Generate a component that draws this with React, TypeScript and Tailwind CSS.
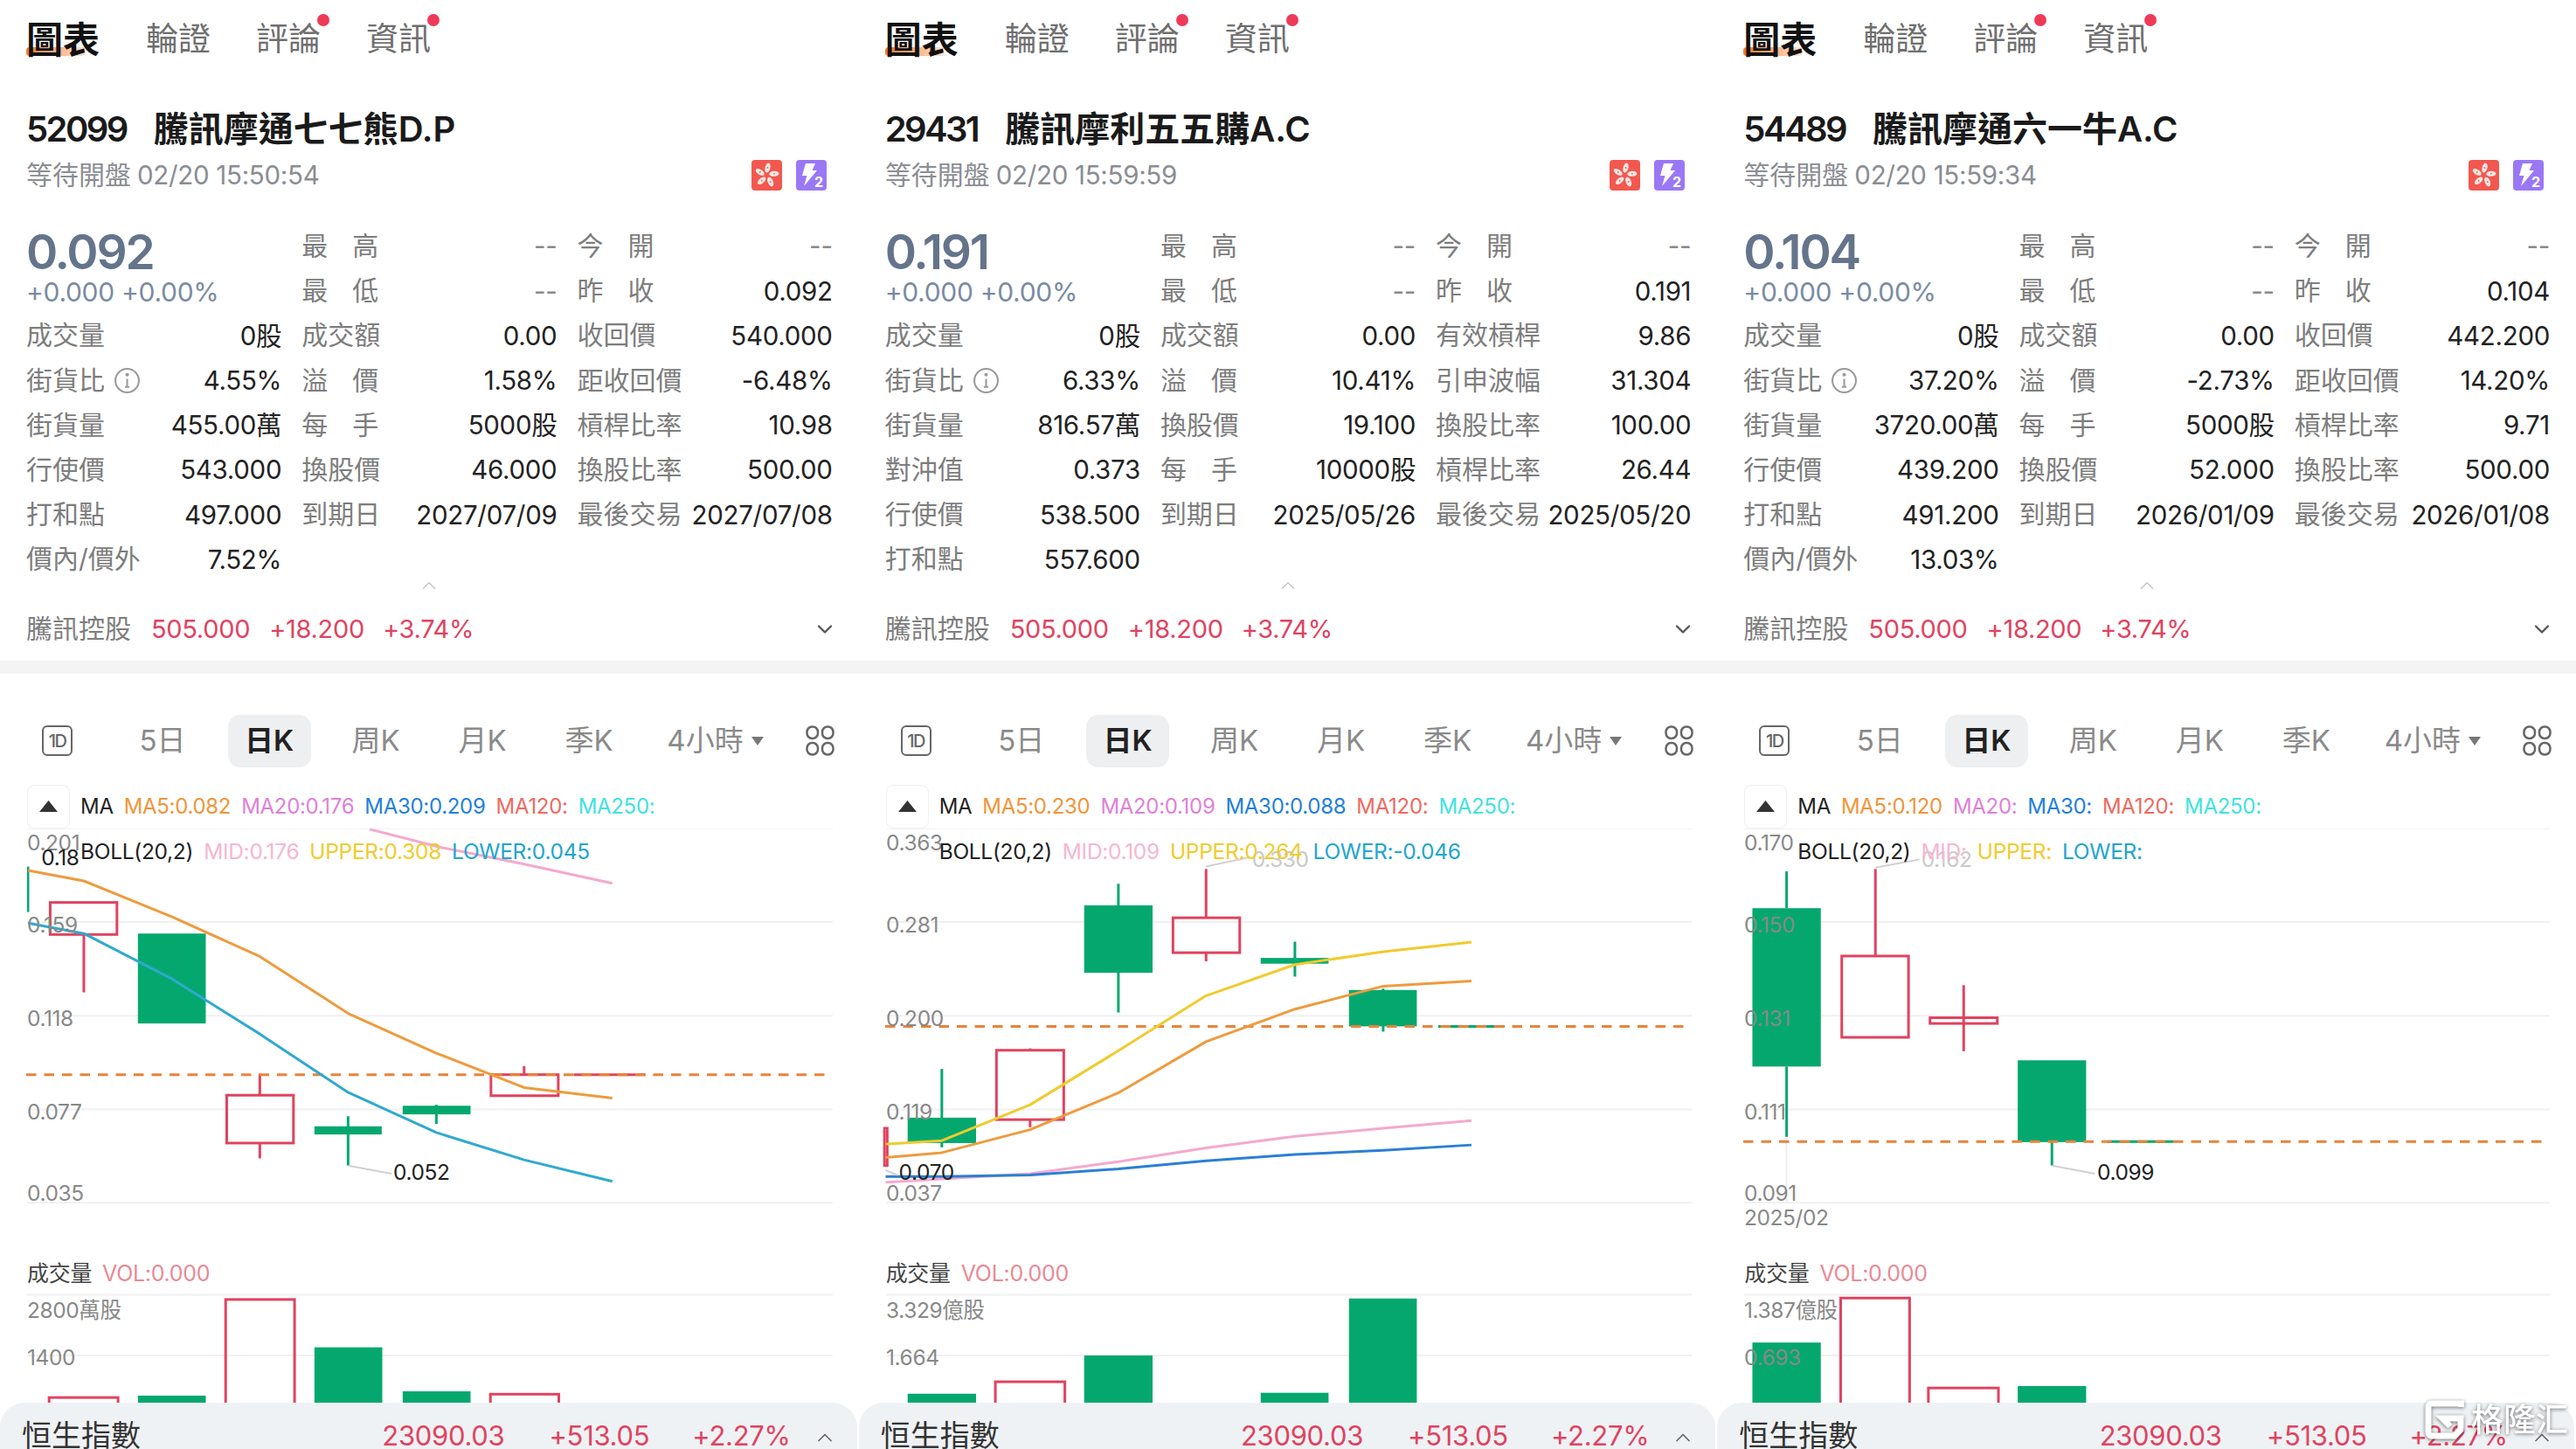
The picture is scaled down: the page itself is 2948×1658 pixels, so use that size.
import { ChevronDown, ChevronUp } from "lucide-react";

const RED = "#e0435f";
const GREEN = "#04a86f";

type Row = { label: string; value: string; info?: boolean };
type Candle = { l: number; r: number; top: number; bot: number; wicks: [number, number][]; wx: number; red: boolean };
type Bar = { l: number; r: number; top: number; red: boolean };
type Line = { color: string; pts: [number, number][] };
type Label = { x: number; y: number; text: string; color?: string };
type Legend = { text: string; color: string };

// chart numbers are read off the reference: x is scaled by 1.584, y by 1.827
const toY = (z: number) => 800 + z / 1.827;

const panels = [
  {
    code: "52099",
    name: "騰訊摩通七七熊D.P",
    time: "02/20 15:50:54",
    price: "0.092",
    rows: [
      { label: "最 高", value: "--" }, { label: "今 開", value: "--" },
      { label: "最 低", value: "--" }, { label: "昨 收", value: "0.092" },
      { label: "成交量", value: "0股" }, { label: "成交額", value: "0.00" }, { label: "收回價", value: "540.000" },
      { label: "街貨比", value: "4.55%", info: true }, { label: "溢 價", value: "1.58%" }, { label: "距收回價", value: "-6.48%" },
      { label: "街貨量", value: "455.00萬" }, { label: "每 手", value: "5000股" }, { label: "槓桿比率", value: "10.98" },
      { label: "行使價", value: "543.000" }, { label: "換股價", value: "46.000" }, { label: "換股比率", value: "500.00" },
      { label: "打和點", value: "497.000" }, { label: "到期日", value: "2027/07/09" }, { label: "最後交易", value: "2027/07/08" },
      { label: "價內/價外", value: "7.52%" },
    ] as Row[],
    ma: [
      { text: "MA5:0.082", color: "#f0953a" }, { text: "MA20:0.176", color: "#e07fd8" }, { text: "MA30:0.209", color: "#1f7fdc" },
      { text: "MA120:", color: "#ee6a5f" }, { text: "MA250:", color: "#3fe3e0" },
    ] as Legend[],
    boll: [
      { text: "MID:0.176", color: "#f6b6d2" }, { text: "UPPER:0.308", color: "#f0cb2e" }, { text: "LOWER:0.045", color: "#22a5cf" },
    ] as Legend[],
    off: 0,
    dash: 785,
    candles: [
      { l: 49, r: 53, top: 350, bot: 445, wicks: [], wx: 51, red: false },
      { l: 91, r: 212, top: 425, bot: 492, wicks: [[492, 613]], wx: 152, red: true },
      { l: 250, r: 373, top: 490, bot: 678, wicks: [], wx: 311, red: false },
      { l: 411, r: 532, top: 828, bot: 928, wicks: [[783, 828], [928, 960]], wx: 471, red: true },
      { l: 570, r: 692, top: 893, bot: 910, wicks: [[872, 975]], wx: 631, red: false },
      { l: 730, r: 853, top: 850, bot: 868, wicks: [[848, 888]], wx: 791, red: false },
      { l: 890, r: 1012, top: 785, bot: 829, wicks: [[767, 785]], wx: 950, red: true },
    ] as Candle[],
    flat: { l: 1040, r: 1170, color: RED },
    lines: [
      { color: "#f4a9cd", pts: [[670, 272], [800, 310], [950, 345], [1110, 385]] },
      { color: "#ee9b3e", pts: [[51, 358], [152, 380], [312, 455], [471, 538], [631, 657], [791, 740], [950, 812], [1110, 834]] },
      { color: "#2fa9cf", pts: [[51, 468], [152, 490], [312, 585], [471, 700], [631, 822], [791, 906], [950, 963], [1110, 1008]] },
    ] as Line[],
    leaders: [[[631, 975], [710, 992]]] as [number, number][][],
    axis: ["0.201", "0.159", "0.118", "0.077", "0.035"],
    extra: [
      { x: 75, y: 333, text: "0.18", color: "#222222" },
      { x: 713, y: 990, text: "0.052", color: "#222222" },
    ] as Label[],
    volAxis: ["2800萬股", "1400"],
    bars: [
      { l: 89, r: 214, top: 1460, red: true }, { l: 250, r: 373, top: 1456, red: false }, { l: 409, r: 534, top: 1255, red: true },
      { l: 570, r: 693, top: 1355, red: false }, { l: 730, r: 853, top: 1447, red: false }, { l: 889, r: 1013, top: 1453, red: true },
    ] as Bar[],
  },
  {
    code: "29431",
    name: "騰訊摩利五五購A.C",
    time: "02/20 15:59:59",
    price: "0.191",
    rows: [
      { label: "最 高", value: "--" }, { label: "今 開", value: "--" },
      { label: "最 低", value: "--" }, { label: "昨 收", value: "0.191" },
      { label: "成交量", value: "0股" }, { label: "成交額", value: "0.00" }, { label: "有效槓桿", value: "9.86" },
      { label: "街貨比", value: "6.33%", info: true }, { label: "溢 價", value: "10.41%" }, { label: "引申波幅", value: "31.304" },
      { label: "街貨量", value: "816.57萬" }, { label: "換股價", value: "19.100" }, { label: "換股比率", value: "100.00" },
      { label: "對沖值", value: "0.373" }, { label: "每 手", value: "10000股" }, { label: "槓桿比率", value: "26.44" },
      { label: "行使價", value: "538.500" }, { label: "到期日", value: "2025/05/26" }, { label: "最後交易", value: "2025/05/20" },
      { label: "打和點", value: "557.600" },
    ] as Row[],
    ma: [
      { text: "MA5:0.230", color: "#f0953a" }, { text: "MA20:0.109", color: "#e07fd8" }, { text: "MA30:0.088", color: "#1f7fdc" },
      { text: "MA120:", color: "#ee6a5f" }, { text: "MA250:", color: "#3fe3e0" },
    ] as Legend[],
    boll: [
      { text: "MID:0.109", color: "#f6b6d2" }, { text: "UPPER:0.264", color: "#f0cb2e" }, { text: "LOWER:-0.046", color: "#22a5cf" },
    ] as Legend[],
    off: -3,
    dash: 684,
    candles: [
      { l: 51, r: 56, top: 897, bot: 975, wicks: [], wx: 53, red: true },
      { l: 93, r: 217, top: 875, bot: 928, wicks: [[773, 937]], wx: 155, red: false },
      { l: 254, r: 376, top: 734, bot: 879, wicks: [[730, 734], [879, 895]], wx: 315, red: true },
      { l: 413, r: 537, top: 431, bot: 572, wicks: [[386, 655]], wx: 475, red: false },
      { l: 574, r: 695, top: 457, bot: 530, wicks: [[355, 457], [530, 548]], wx: 634, red: true },
      { l: 733, r: 856, top: 541, bot: 553, wicks: [[507, 580]], wx: 795, red: false },
      { l: 893, r: 1016, top: 608, bot: 684, wicks: [[605, 695]], wx: 955, red: false },
    ] as Candle[],
    flat: { l: 1055, r: 1175, color: GREEN },
    lines: [
      { color: "#f4a9cd", pts: [[53, 1010], [155, 1003], [315, 992], [475, 967], [634, 938], [795, 914], [955, 897], [1115, 881]] },
      { color: "#2b7fd4", pts: [[53, 998], [155, 998], [315, 995], [475, 982], [634, 965], [795, 952], [955, 943], [1115, 932]] },
      { color: "#ee9b3e", pts: [[53, 958], [155, 948], [315, 900], [475, 823], [634, 716], [795, 648], [955, 600], [1115, 589]] },
      { color: "#f0cb2e", pts: [[53, 930], [155, 923], [315, 848], [475, 735], [634, 620], [795, 555], [955, 528], [1115, 508]] },
    ] as Line[],
    leaders: [[[634, 350], [715, 330]], [[53, 985], [75, 995]]] as [number, number][][],
    axis: ["0.363", "0.281", "0.200", "0.119", "0.037"],
    extra: [
      { x: 77, y: 990, text: "0.070", color: "#222222" },
      { x: 717, y: 335, text: "0.330", color: "#c9c9c9" },
    ] as Label[],
    volAxis: ["3.329億股", "1.664"],
    bars: [
      { l: 93, r: 217, top: 1452, red: false }, { l: 252, r: 378, top: 1427, red: true }, { l: 413, r: 537, top: 1372, red: false },
      { l: 733, r: 856, top: 1450, red: false }, { l: 893, r: 1016, top: 1253, red: false },
    ] as Bar[],
  },
  {
    code: "54489",
    name: "騰訊摩通六一牛A.C",
    time: "02/20 15:59:34",
    price: "0.104",
    rows: [
      { label: "最 高", value: "--" }, { label: "今 開", value: "--" },
      { label: "最 低", value: "--" }, { label: "昨 收", value: "0.104" },
      { label: "成交量", value: "0股" }, { label: "成交額", value: "0.00" }, { label: "收回價", value: "442.200" },
      { label: "街貨比", value: "37.20%", info: true }, { label: "溢 價", value: "-2.73%" }, { label: "距收回價", value: "14.20%" },
      { label: "街貨量", value: "3720.00萬" }, { label: "每 手", value: "5000股" }, { label: "槓桿比率", value: "9.71" },
      { label: "行使價", value: "439.200" }, { label: "換股價", value: "52.000" }, { label: "換股比率", value: "500.00" },
      { label: "打和點", value: "491.200" }, { label: "到期日", value: "2026/01/09" }, { label: "最後交易", value: "2026/01/08" },
      { label: "價內/價外", value: "13.03%" },
    ] as Row[],
    ma: [
      { text: "MA5:0.120", color: "#f0953a" }, { text: "MA20:", color: "#e07fd8" }, { text: "MA30:", color: "#1f7fdc" },
      { text: "MA120:", color: "#ee6a5f" }, { text: "MA250:", color: "#3fe3e0" },
    ] as Legend[],
    boll: [
      { text: "MID:", color: "#f6b6d2" }, { text: "UPPER:", color: "#f0cb2e" }, { text: "LOWER:", color: "#22a5cf" },
    ] as Legend[],
    off: -5,
    dash: 925,
    candles: [
      { l: 72, r: 196, top: 437, bot: 768, wicks: [[360, 437], [768, 915]], wx: 134, red: false },
      { l: 234, r: 355, top: 537, bot: 707, wicks: [[355, 537]], wx: 295, red: true },
      { l: 394, r: 516, top: 666, bot: 678, wicks: [[598, 736]], wx: 455, red: true },
      { l: 553, r: 677, top: 755, bot: 926, wicks: [[926, 975]], wx: 615, red: false },
    ] as Candle[],
    flat: { l: 716, r: 836, color: GREEN },
    lines: [] as Line[],
    leaders: [[[615, 975], [693, 992]], [[295, 352], [375, 335]]] as [number, number][][],
    axis: ["0.170", "0.150", "0.131", "0.111", "0.091"],
    extra: [
      { x: 697, y: 990, text: "0.099", color: "#222222" },
      { x: 378, y: 335, text: "0.162", color: "#c9c9c9" },
      { x: 57, y: 1084, text: "2025/02" },
    ] as Label[],
    volAxis: ["1.387億股", "0.693"],
    bars: [
      { l: 72, r: 196, top: 1345, red: false }, { l: 232, r: 357, top: 1252, red: true },
      { l: 391, r: 518, top: 1440, red: true }, { l: 553, r: 677, top: 1436, red: false },
    ] as Bar[],
    dateLine: { x: 134, from: 915, to: 1053 },
  },
];

type Panel = (typeof panels)[number];

function HkIcon() {
  return (
    <svg width="35" height="35" viewBox="0 0 35 35">
      <rect width="35" height="35" rx="4" fill="#f2584f" />
      {[0, 72, 144, 216, 288].map((deg) => (
        <g key={deg} transform={`rotate(${deg} 17.5 17.5)`}>
          <ellipse cx="18.500" cy="9" rx="3" ry="5.600" fill="#fde8e4" transform="rotate(14 18.500 9)" />
          <circle cx="18.500" cy="9" r="0.900" fill="#f2584f" />
        </g>
      ))}
    </svg>
  );
}

function BoltIcon() {
  return (
    <svg width="35" height="35" viewBox="0 0 35 35">
      <rect width="35" height="35" rx="4" fill="#9a78f5" />
      <path d="M11 4h11l-3.500 8H24L9 30l3.500-12H7z" fill="#ffffff" />
      <text x="21" y="31" fontSize="16" fontWeight="700" fill="#ffffff" fontFamily="Inter, sans-serif">2</text>
    </svg>
  );
}

function InfoIcon() {
  return (
    <svg width="31" height="31" viewBox="0 0 30 30" fill="none" stroke="#9a9a9a" strokeWidth="2">
      <circle cx="15" cy="15" r="13" />
      <path d="M15 13v9M12.500 22h5" />
      <circle cx="15" cy="8.500" r="1" fill="#9a9a9a" />
    </svg>
  );
}

function GridIcon() {
  return (
    <svg width="33" height="35" viewBox="0 0 33 35" fill="none" stroke="#666666" strokeWidth="2.500">
      <rect x="1.500" y="1.500" width="12.500" height="13.500" rx="6" />
      <rect x="19" y="1.500" width="12.500" height="13.500" rx="6" />
      <rect x="1.500" y="20" width="12.500" height="13.500" rx="6" />
      <rect x="19" y="20" width="12.500" height="13.500" rx="6" />
    </svg>
  );
}

function StatCell({ row }: { row: Row }) {
  const parts = row.label.split(" ");
  return (
    <div className="flex items-center justify-between min-w-0">
      <div className="flex items-center gap-[10px] whitespace-nowrap text-[#7d7d7d] text-[30px]">
        {parts.length === 2 ? (
          <span className="flex justify-between w-[88px]">
            <span>{parts[0]}</span>
            <span>{parts[1]}</span>
          </span>
        ) : (
          <span>{row.label}</span>
        )}
        {row.info && <InfoIcon />}
      </div>
      <span className={`whitespace-nowrap text-[29.5px] tracking-[-0.3px] ${row.value === "--" ? "text-[#8a8a8a]" : "text-[#222222]"}`}>
        {row.value}
      </span>
    </div>
  );
}

function Chart({ p }: { p: Panel }) {
  const X = (z: number) => z / 1.584 + p.off;
  const dashY = toY(p.dash);
  return (
    <div className="relative h-[657px]">
      <svg className="block w-full h-[657px]" viewBox="0 948 982.67 657">
        {[270, 466, 662, 858, 1053, 1245, 1372].map((z) => (
          <line key={z} x1="31" x2="953" y1={toY(z)} y2={toY(z)} stroke="#f0f0f0" strokeWidth="2" />
        ))}

        {"dateLine" in p && p.dateLine && (
          <line x1={X(p.dateLine.x)} x2={X(p.dateLine.x)} y1={toY(p.dateLine.from)} y2={toY(p.dateLine.to)} stroke="#eeeeee" strokeWidth="2" />
        )}

        {p.candles.map((c, i) => {
          const color = c.red ? RED : GREEN;
          return (
            <g key={i}>
              {c.wicks.map(([a, b], j) => (
                <line key={j} x1={X(c.wx)} x2={X(c.wx)} y1={toY(a)} y2={toY(b)} stroke={color} strokeWidth="3" />
              ))}
              <rect
                x={X(c.l)}
                y={toY(c.top)}
                width={X(c.r) - X(c.l)}
                height={toY(c.bot) - toY(c.top)}
                fill={c.red ? "none" : color}
                stroke={c.red ? color : "none"}
                strokeWidth="3"
              />
            </g>
          );
        })}

        <line x1={X(p.flat.l)} x2={X(p.flat.r)} y1={dashY} y2={dashY} stroke={p.flat.color} strokeWidth="3" />
        <line x1="30" x2="950" y1={dashY} y2={dashY} stroke="#e8833a" strokeWidth="3" strokeDasharray="11.500 9" />

        {p.lines.map((l) => (
          <polyline
            key={l.color}
            points={l.pts.map(([x, y]) => `${X(x)},${toY(y)}`).join(" ")}
            fill="none"
            stroke={l.color}
            strokeWidth="3"
            strokeLinejoin="round"
          />
        ))}

        {p.leaders.map((pts, i) => (
          <polyline key={i} points={pts.map(([x, y]) => `${X(x)},${toY(y)}`).join(" ")} fill="none" stroke="#d0d0d0" strokeWidth="2" />
        ))}

        {p.bars.map((b, i) => (
          <rect
            key={i}
            x={X(b.l)}
            y={toY(b.top)}
            width={X(b.r) - X(b.l)}
            height={1620 - toY(b.top)}
            fill={b.red ? "none" : GREEN}
            stroke={b.red ? RED : "none"}
            strokeWidth="3"
          />
        ))}

        <g fontSize="24.500" fill="#888888" letterSpacing="-0.4" dominantBaseline="middle" transform="translate(0 1.500)">
          {p.axis.map((t, i) => (
            <text key={t} x="31" y={toY([302, 472, 668, 863, 1033][i])}>{t}</text>
          ))}
          {p.extra.map((t) => (
            <text key={t.text} x={X(t.x)} y={toY(t.y)} fill={t.color ?? "#888888"}>{t.text}</text>
          ))}
          {p.volAxis.map((t, i) => (
            <text key={t} x="31" y={toY([1278, 1377][i])}>{t}</text>
          ))}
        </g>
      </svg>

      {/* legends sit on top of the candles */}
      <div className="absolute left-[92px] top-[11px] flex items-center gap-[12px] text-[24.5px] leading-[30px] tracking-[-0.3px] whitespace-nowrap">
        <span className="text-[#222222]">BOLL(20,2)</span>
        {p.boll.map((l) => (
          <span key={l.text} style={{ color: l.color }}>{l.text}</span>
        ))}
      </div>
      <div className="absolute left-[31px] top-[494px] flex items-center gap-[12px] text-[25px] leading-[30px] tracking-[-0.3px] whitespace-nowrap">
        <span className="text-[#444444]">成交量</span>
        <span className="text-[#e88a96]">VOL:0.000</span>
      </div>
    </div>
  );
}

function StockPanel({ p }: { p: Panel }) {
  return (
    <div className="flex flex-col h-[1658px] min-w-0">
      <div className="px-[30px]">
        <div className="flex items-center h-[88px] pt-[2px] text-[37px] text-[#6f6f6f]">
          <div className="relative w-[84px] font-semibold text-[42px] text-[#111111]">
            <span className="absolute left-0 top-[40px] w-[68px] h-[10px] rounded-[4px] bg-gradient-to-r from-[#ee7a1c] to-[#fbe3cf]" />
            <span className="relative">圖表</span>
          </div>
          <span className="ml-[53px]">輪證</span>
          <span className="relative ml-[52px]">
            評論
            <span className="absolute right-[-10px] top-[-1px] w-[14px] h-[14px] rounded-full bg-[#ee3a57]" />
          </span>
          <span className="relative ml-[52px]">
            資訊
            <span className="absolute right-[-10px] top-[-1px] w-[14px] h-[14px] rounded-full bg-[#ee3a57]" />
          </span>
        </div>

        <div className="flex items-center gap-[31px] mt-[30px] h-[60px] text-[40px] font-semibold text-[#1a1a1a] whitespace-nowrap">
          <span className="tracking-[-2.600px]">{p.code}</span>
          <span>{p.name}</span>
        </div>

        <div className="flex items-center h-[44px] text-[30px] text-[#8a8d93] whitespace-nowrap">
          <span className="mr-[7px]">等待開盤</span>
          <span className="text-[29.5px] tracking-[-0.3px]">{p.time}</span>
          <div className="flex gap-[16px] ml-auto mr-[7px]">
            <HkIcon />
            <BoltIcon />
          </div>
        </div>

        <div className="grid grid-cols-3 gap-x-[23px] auto-rows-[51.2px] items-center mt-[34px]">
          <div className="row-span-2 self-start pt-[3px] whitespace-nowrap">
            <div className="text-[55px] leading-[58px] font-semibold text-[#64748b] tracking-[-2.200px]">{p.price}</div>
            <div className="text-[30px] leading-[34px] text-[#7a8ba3] tracking-[-0.3px]">+0.000 +0.00%</div>
          </div>
          {p.rows.map((r) => (
            <StatCell key={r.label} row={r} />
          ))}
        </div>

        <div className="flex justify-center h-[11px] mt-[-2px]">
          <ChevronUp size={26} strokeWidth={1.500} className="text-[#c8c8c8] mt-[-7px]" />
        </div>

        <div className="flex items-center h-[81px] pt-[9px] whitespace-nowrap">
          <span className="text-[30px] text-[#7d7d7d]">騰訊控股</span>
          <span className="ml-[23px] text-[29px] tracking-[-0.3px] text-[#e0435f]">505.000</span>
          <span className="ml-[22px] text-[29px] tracking-[-0.3px] text-[#e0435f]">+18.200</span>
          <span className="ml-[21px] text-[29px] tracking-[-0.3px] text-[#e0435f]">+3.74%</span>
          <ChevronDown size={28} strokeWidth={2} className="ml-auto mr-[-5px] text-[#555555]" />
        </div>
      </div>

      <div className="h-[15px] bg-[#f4f4f5]" />

      <div className="flex items-center h-[60px] mt-[47px] pl-[6px] text-[33px] text-[#8a8a8a] whitespace-nowrap">
        <div className="flex justify-center w-[119px]">
          <span className="flex items-center justify-center w-[35px] h-[35px] rounded-[6px] border-2 border-[#666666] text-[#666666] text-[20px] font-medium tracking-[-1.500px]">1D</span>
        </div>
        <div className="flex justify-center w-[122px]">5日</div>
        <div className="flex justify-center w-[122px]">
          <span className="flex items-center justify-center w-[95px] h-[60px] rounded-[14px] bg-[#eeeff1] font-semibold text-[#222222]">日K</span>
        </div>
        <div className="flex justify-center w-[122px]">周K</div>
        <div className="flex justify-center w-[122px]">月K</div>
        <div className="flex justify-center w-[122px]">季K</div>
        <div className="flex items-center justify-center gap-[9px] w-[167px]">
          4小時
          <svg width="14" height="10" viewBox="0 0 14 10"><path d="M0 0h14L7 10z" fill="#777777" /></svg>
        </div>
        <div className="ml-[20px] flex">
          <GridIcon />
        </div>
      </div>

      <div className="flex items-center h-[50px] mt-[20px] pl-[31px] text-[24px] whitespace-nowrap tracking-[-0.3px]">
        <div className="flex items-center justify-center w-[49px] h-[50px] rounded-[8px] border border-[#f0f0f0] mr-[12px]">
          <svg width="21" height="13" viewBox="0 0 21 13"><path d="M10.500 0L21 13H0z" fill="#333333" /></svg>
        </div>
        <span className="text-[#222222] mr-[12px]">MA</span>
        <div className="flex items-center gap-[12px]">
          {p.ma.map((m) => (
            <span key={m.text} style={{ color: m.color }}>{m.text}</span>
          ))}
        </div>
      </div>

      <Chart p={p} />

      <div className="flex items-start h-[53px] overflow-hidden rounded-t-[28px] bg-[#eff2f4] mr-[2px] pl-[25px] pr-[23px] pt-[16px] leading-[44px] whitespace-nowrap">
        <span className="text-[34px] text-[#333333] flex-1">恒生指數</span>
        <span className="text-[31px] tracking-[-0.3px] text-[#e0435f]">23090.03</span>
        <span className="text-[31px] tracking-[-0.3px] text-[#e0435f] ml-[51px]">+513.05</span>
        <span className="text-[31px] tracking-[-0.3px] text-[#e0435f] ml-[49px]">+2.27%</span>
        <ChevronUp size={28} strokeWidth={1.500} className="ml-[25px] mt-[10px] text-[#666666]" />
      </div>
    </div>
  );
}

export default function App() {
  return (
    <div className="relative w-[2948px] h-[1658px] overflow-hidden bg-white font-['Inter','Noto_Sans_CJK_TC',sans-serif]">
      <div className="grid grid-cols-3">
        {panels.map((p) => (
          <StockPanel key={p.code} p={p} />
        ))}
      </div>

      {/* watermark */}
      <div className="absolute left-[2775px] top-[1602px] flex items-center gap-[8px] drop-shadow-[0_1px_2px_rgba(0,0,0,0.55)]">
        <svg width="45" height="45" viewBox="0 0 45 45" fill="none" stroke="#ffffff" strokeWidth="7">
          <path d="M42 8V4H8a4 4 0 0 0-4 4v29a4 4 0 0 0 4 4h26l7-7V21H20l9 9" />
        </svg>
        <span className="text-[37px] font-medium text-white leading-[45px] whitespace-nowrap">格隆汇</span>
      </div>
    </div>
  );
}
